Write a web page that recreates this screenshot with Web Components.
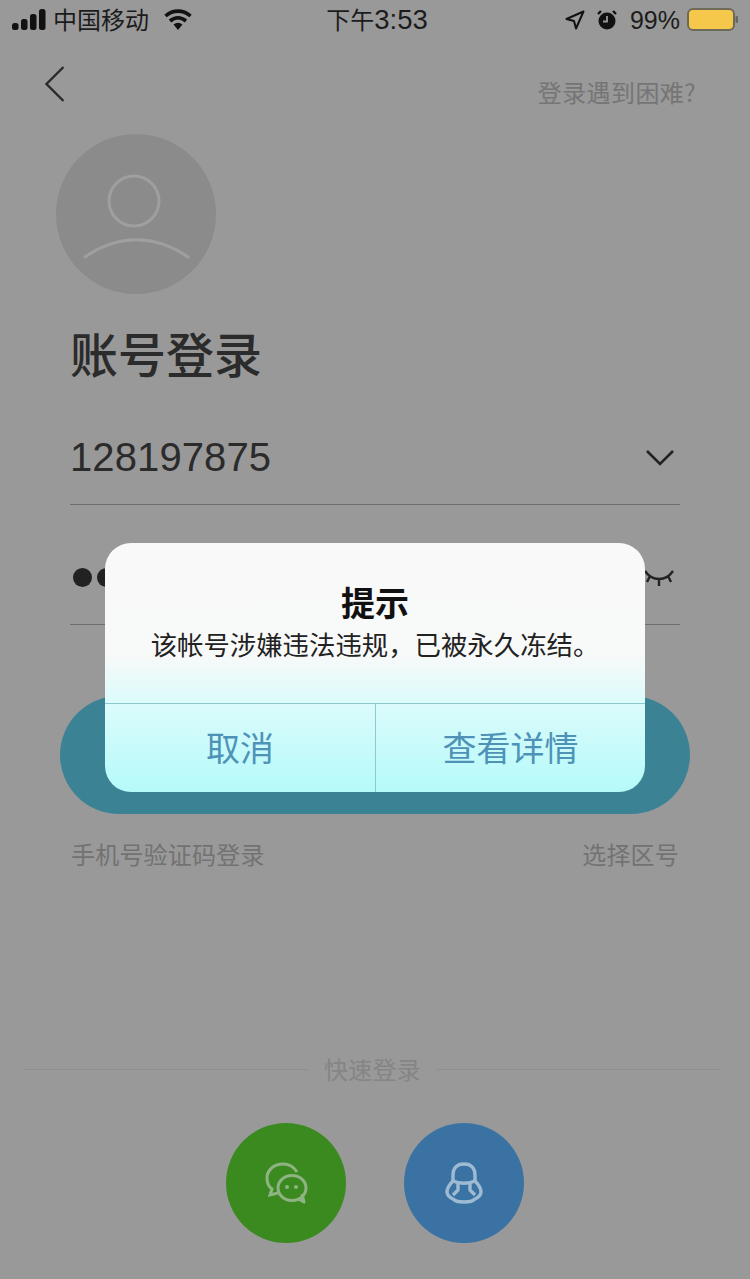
<!DOCTYPE html>
<html lang="zh-CN">
<head>
<meta charset="utf-8">
<title>账号登录</title>
<style>
    html, body { margin: 0; padding: 0; }
    body {
        width: 750px;
        height: 1279px;
        overflow: hidden;
        background: #999999;
        font-family: "Noto Sans CJK SC", "Noto Sans", sans-serif;
    }
</style>
</head>
<body>
<login-page>
    <status-bar slot="status"></status-bar>
    <login-header slot="header"></login-header>
    <user-avatar slot="avatar"></user-avatar>
    <h1 slot="title" style="margin:26px 0 4px;font:500 48px/64px 'Noto Sans CJK SC',sans-serif;color:#2b2b2b;padding-left:70px;">账号登录</h1>
    <form-field slot="account" top="22"><span style="font:40px/44px 'Liberation Sans',sans-serif;letter-spacing:.1px;color:#2b2b2b;">128197875</span><svg slot="icon" width="30" height="18" viewBox="0 0 30 18"><path d="M2 3l13 13L28 3" fill="none" stroke="#222" stroke-width="2.6"/></svg></form-field>
    <form-field slot="password" top="25"><password-dots count="8"></password-dots><svg slot="icon" width="32" height="20" viewBox="0 0 32 20"><path d="M2 4c4 6 9 8 14 8s10-2 14-8M16 12v7M7 9l-3 6M25 9l3 6" fill="none" stroke="#222" stroke-width="2.400"/></svg></form-field>
    <login-button slot="submit"></login-button>
    <login-links slot="links"></login-links>
    <quick-login slot="quick"></quick-login>
    <alert-dialog slot="dialog" heading="提示" message="该帐号涉嫌违法违规，已被永久冻结。" cancel="取消" confirm="查看详情"></alert-dialog>
</login-page>

<script>
// Page frame, the dialog sits on top of the flow
class LoginPage extends HTMLElement {
    constructor() {
        super();
        this.attachShadow({ mode: 'open' });
        this.shadowRoot.innerHTML = `
            <style>
                :host { display: block; position: relative; width: 750px; height: 1279px; background: #999; }
                .col { display: flex; flex-direction: column; }
            </style>
            <div class="col">
                <slot name="status"></slot>
                <slot name="header"></slot>
                <slot name="avatar"></slot>
                <slot name="title"></slot>
                <slot name="account"></slot>
                <slot name="password"></slot>
                <slot name="submit"></slot>
                <slot name="links"></slot>
                <slot name="quick"></slot>
            </div>
            <slot name="dialog"></slot>
        `;
    }
}

class StatusBar extends HTMLElement {
    constructor() {
        super();
        this.attachShadow({ mode: 'open' });
        this.shadowRoot.innerHTML = `
            <style>
                :host {
                    display: grid;
                    grid-template-columns: 1fr auto 1fr;
                    align-items: center;
                    height: 40px;
                    padding: 0 12px 0 12px;
                    box-sizing: border-box;
                    color: #1c1c1c;
                    font: 24px/30px "Noto Sans CJK SC", sans-serif;
                }
                .left, .right { display: flex; align-items: center; }
                .right { justify-content: flex-end; }
                .carrier { margin: -2px 15px 0 7px; font-weight: 400; }
                .time { display: flex; align-items: baseline; margin: -2px 0 0 4px; }
                .digits { font: 27.5px/30px "Liberation Sans", sans-serif; }
                .pct { margin: 0 7px 0 13px; font-family: "Liberation Sans", sans-serif; font-size: 25px; }
                svg { display: block; }
            </style>
            <div class="left">
                <svg width="34" height="22" viewBox="0 0 34 22"><rect x="0" y="14" width="6.500" height="7" rx="2.500" fill="#111"/><rect x="9" y="10" width="6.500" height="11" rx="2.500" fill="#111"/><rect x="18" y="5" width="6.500" height="16" rx="2.500" fill="#111"/><rect x="27" y="0" width="6.500" height="21" rx="2.500" fill="#111"/></svg>
                <span class="carrier">中国移动</span>
                <svg width="28" height="22" viewBox="0 0 28 22"><path d="M1.500 7C9 .5 19 .5 26.500 7M6 12c5-4.200 11-4.200 16 0" fill="none" stroke="#111" stroke-width="3.600"/><path d="M9.500 15.500c3-2.200 6-2.200 9 0L14 21z" fill="#111"/></svg>
            </div>
            <span class="time">下午<span class="digits">3:53</span></span>
            <div class="right">
                <svg width="20" height="20" viewBox="0 0 20 20" style="margin-right:12px"><path d="M18.500 1.500L1.500 9l7.500 2 2 7.500z" fill="none" stroke="#111" stroke-width="2" stroke-linejoin="round"/></svg>
                <svg width="20" height="20" viewBox="0 0 20 20"><circle cx="10" cy="11" r="8.500" fill="#111"/><path d="M10 6v5.500H6" fill="none" stroke="#999" stroke-width="1.800"/><path d="M1 4l3-3M19 4l-3-3" stroke="#111" stroke-width="2.400"/></svg>
                <span class="pct">99%</span>
                <svg width="51" height="24" viewBox="0 0 51 24"><rect x="1" y="1" width="46" height="21" rx="5" fill="#f5c84b" stroke="#6e6a58" stroke-width="2"/><rect x="48.500" y="8" width="2.500" height="7" rx="1" fill="#666"/></svg>
            </div>
        `;
    }
}

class LoginHeader extends HTMLElement {
    constructor() {
        super();
        this.attachShadow({ mode: 'open' });
        this.shadowRoot.innerHTML = `
            <style>
                :host {
                    display: flex;
                    justify-content: space-between;
                    align-items: flex-start;
                    height: 94px;
                    padding: 0 54px 0 44px;
                    box-sizing: border-box;
                }
                svg { display: block; margin-top: 25px; }
                .help { margin-top: 35px; font: 400 24px/34px "Noto Sans CJK SC", sans-serif; letter-spacing: .4px; color: #757575; }
            </style>
            <svg width="22" height="38" viewBox="0 0 22 38"><path d="M19.500 2L2.500 19l17 17" fill="none" stroke="#2a2a2a" stroke-width="2.400"/></svg>
            <span class="help">登录遇到困难?</span>
        `;
    }
}

class UserAvatar extends HTMLElement {
    constructor() {
        super();
        this.attachShadow({ mode: 'open' });
        this.shadowRoot.innerHTML = `
            <style>
                :host { display: block; padding-left: 56px; }
                .disc { display: flex; align-items: center; justify-content: center; width: 160px; height: 160px; border-radius: 50%; background: #8b8b8b; }
            </style>
            <div class="disc">
                <svg width="160" height="160" viewBox="0 0 160 160"><circle cx="78" cy="67" r="25" fill="none" stroke="#9f9f9f" stroke-width="3"/><path d="M29 123c33-23 70-23 103 0" fill="none" stroke="#9f9f9f" stroke-width="3" stroke-linecap="round"/></svg>
            </div>
        `;
    }
}

class FormField extends HTMLElement {
    constructor() {
        super();
        this.attachShadow({ mode: 'open' });
        const top = Number(this.getAttribute('top') || 0);
        this.shadowRoot.innerHTML = `
            <style>
                :host {
                    display: flex;
                    justify-content: space-between;
                    align-items: center;
                    box-sizing: border-box;
                    margin: 0 70px;
                    padding: ${top}px 5px 0 0;
                    height: ${95 + top}px;
                    border-bottom: 1px solid #6e6e6e;
                }
            </style>
            <slot></slot>
            <slot name="icon"></slot>
        `;
    }
}

class PasswordDots extends HTMLElement {
    constructor() {
        super();
        this.attachShadow({ mode: 'open' });
        const count = Number(this.getAttribute('count') || 0);
        this.shadowRoot.innerHTML = `
            <style>
                :host { display: flex; gap: 5px; padding-left: 3px; }
                i { display: block; width: 19px; height: 19px; border-radius: 50%; background: #222; }
            </style>
            ${'<i></i>'.repeat(count)}
        `;
    }
}

class LoginButton extends HTMLElement {
    constructor() {
        super();
        this.attachShadow({ mode: 'open' });
        this.shadowRoot.innerHTML = `
            <style>
                :host { display: block; height: 118px; margin: 71px 60px 0; border-radius: 59px; background: #3c8295; }
            </style>
        `;
    }
}

class LoginLinks extends HTMLElement {
    constructor() {
        super();
        this.attachShadow({ mode: 'open' });
        this.shadowRoot.innerHTML = `
            <style>
                :host {
                    display: flex;
                    justify-content: space-between;
                    margin: 23px 71px 0 71px;
                    font: 400 24px/34px "Noto Sans CJK SC", sans-serif;
                    letter-spacing: .2px;
                    color: #727272;
                }
            </style>
            <span>手机号验证码登录</span>
            <span>选择区号</span>
        `;
    }
}

class QuickLogin extends HTMLElement {
    constructor() {
        super();
        this.attachShadow({ mode: 'open' });
        this.shadowRoot.innerHTML = `
            <style>
                :host { display: block; margin-top: 181px; }
                .label {
                    display: flex;
                    align-items: center;
                    gap: 16px;
                    margin: 0 30px 0 25px;
                    font: 400 24px/34px "Noto Sans CJK SC", sans-serif;
                    letter-spacing: .3px;
                    color: #858585;
                }
                .label::before, .label::after { content: ""; flex: 1; height: 1px; background: #8e8e8e; }
                .icons { display: flex; justify-content: center; gap: 58px; margin-top: 37px; }
                .circle { display: flex; align-items: center; justify-content: center; width: 120px; height: 120px; border-radius: 50%; }
                .wechat { background: #3b8a20; }
                .qq { background: #3a73a3; }
            </style>
            <div class="label">快速登录</div>
            <div class="icons">
                <div class="circle wechat">
                    <svg width="44" height="44" viewBox="0 0 44 44" fill="none" stroke="#8fb383" stroke-width="3"><path d="M33 11C30 6 25 3 19 3 10 3 3 9 3 17c0 5 2 9 5 11l-2 6 8-2"/><ellipse cx="28" cy="27" rx="14" ry="12.500"/><path d="M34 38l6 3-2-8" stroke-linejoin="round"/><circle cx="23" cy="26" r="2" fill="#8fb383" stroke="none"/><circle cx="32" cy="26" r="2" fill="#8fb383" stroke="none"/></svg>
                </div>
                <div class="circle qq">
                    <svg width="38" height="42" viewBox="0 0 38 42" fill="none" stroke="#9ebbd3" stroke-width="3.400" stroke-linejoin="round"><path d="M8 19V13C8 6 12 2 19 2s11 4 11 11v6"/><path d="M8 19c-4 4-6 8-6 11 0 3 2 5 6 7 2 2 6 3 11 3s9-1 11-3c4-2 6-4 6-7 0-3-2-7-6-11"/><path d="M8 19c6 3 16 3 22 0M13 22v6l-5 5M25 22v6l5 5"/></svg>
                </div>
            </div>
        `;
    }
}

class AlertDialog extends HTMLElement {
    constructor() {
        super();
        this.attachShadow({ mode: 'open' });
        this.shadowRoot.innerHTML = `
            <style>
                :host {
                    position: absolute;
                    left: 105px;
                    top: 543px;
                    width: 540px;
                    height: 249px;
                    display: flex;
                    flex-direction: column;
                    border-radius: 26px;
                    overflow: hidden;
                    background: linear-gradient(#f9f9f9 0%, #f8f9f9 45%, #dcfbfb 64%, #b5fafa 100%);
                    text-align: center;
                }
                .body { height: 160px; box-sizing: border-box; padding-top: 35px; }
                .heading { font: 700 34px/47px "Noto Sans CJK SC", sans-serif; color: #111; }
                .message { font: 400 26.4px/38px "Noto Sans CJK SC", sans-serif; color: #222; }
                .actions { flex: 1; display: grid; grid-template-columns: 270px 1fr; border-top: 1px solid #8fc8cf; }
                .actions span { display: flex; align-items: center; justify-content: center; padding-bottom: 3px; font: 400 34px/44px "Noto Sans CJK SC", sans-serif; color: #4f92b8; }
                .actions span + span { border-left: 1px solid #8fc8cf; }
            </style>
            <div class="body">
                <div class="heading">${this.getAttribute('heading')}</div>
                <div class="message">${this.getAttribute('message')}</div>
            </div>
            <div class="actions">
                <span>${this.getAttribute('cancel')}</span>
                <span>${this.getAttribute('confirm')}</span>
            </div>
        `;
    }
}

customElements.define('login-page', LoginPage);
customElements.define('status-bar', StatusBar);
customElements.define('login-header', LoginHeader);
customElements.define('user-avatar', UserAvatar);
customElements.define('form-field', FormField);
customElements.define('password-dots', PasswordDots);
customElements.define('login-button', LoginButton);
customElements.define('login-links', LoginLinks);
customElements.define('quick-login', QuickLogin);
customElements.define('alert-dialog', AlertDialog);
</script>
</body>
</html>
